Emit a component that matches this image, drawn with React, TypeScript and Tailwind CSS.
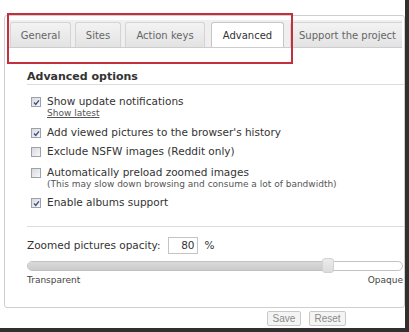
import React from 'react';

const Box: React.FC<{ checked?: boolean }> = ({ checked }) => (
  <span className="mt-[2px] flex h-[10px] w-[10px] shrink-0 items-center justify-center border border-[#9ca1aa] bg-gradient-to-br from-[#d8d9df] to-[#f7f7f9]">
    {checked && (
      <svg viewBox="0 0 8 8" className="h-[7px] w-[7px]">
        <path d="M1.2 4 L3.2 6.2 L6.8 1.6" fill="none" stroke="#3d4c7c" strokeWidth="1.5" />
      </svg>
    )}
  </span>
);

const Tab: React.FC<{ label: string; className?: string; active?: boolean }> = ({ label, className = '', active }) => (
  <div
    className={
      active
        ? `relative -mb-px flex h-[26px] items-center justify-center rounded-t-[3px] border border-b-0 border-[#c6c6c6] bg-white text-[#333] ${className}`
        : `flex h-[25px] items-center justify-center rounded-t-[3px] border border-b-0 border-[#d4d4d4] bg-gradient-to-b from-[#f3f3f3] to-[#e3e3e3] text-[#666] ${className}`
    }
  >
    {label}
  </div>
);

export default function App() {
  return (
    <div className="relative h-[332px] w-[409px] overflow-hidden bg-white font-['DejaVu_Sans',sans-serif] text-[#333]">
      <div className="h-[332px] w-[409px] border-b-4 border-r-4 border-[#303030] pl-[4px] pt-[15px]">
        <div className="h-[293px] w-[401px] overflow-hidden rounded-[3px] border border-[#cfcfcf]">
          {/* tabs */}
          <div className="mx-[2px] mt-[4px] flex h-[28px] items-end overflow-hidden border-b border-[#cdcdcd] bg-[#efefef] px-[3px] text-[10px] whitespace-nowrap">
            <Tab label="General" className="w-[61px] shrink-0" />
            <Tab label="Sites" className="ml-[4px] w-[46px] shrink-0" />
            <Tab label="Action keys" className="ml-[4px] w-[80px] shrink-0" />
            <Tab label="Advanced" active className="ml-[6px] w-[73px] shrink-0" />
            <Tab label="Support the project" className="ml-[6px] shrink-0 px-[8px]" />
          </div>

          <div className="pl-[22px]">
            <div className="mt-[22px] border-b border-[#dcdcdc] text-[11px] leading-[14px] font-bold">Advanced options</div>

            <div className="text-[10.5px] leading-[13px]">
              <div className="mt-[10px] flex pl-[4px]">
                <Box checked />
                <div className="ml-[6px]">
                  <div>Show update notifications</div>
                  <div className="text-[9px] leading-[11px] text-[#555] underline">Show latest</div>
                </div>
              </div>
              <div className="mt-[7px] flex pl-[4px]">
                <Box checked />
                <div className="ml-[6px]">Add viewed pictures to the browser's history</div>
              </div>
              <div className="mt-[6px] flex pl-[4px]">
                <Box />
                <div className="ml-[6px]">Exclude NSFW images (Reddit only)</div>
              </div>
              <div className="mt-[8px] flex pl-[4px]">
                <Box />
                <div className="ml-[6px]">
                  <div>Automatically preload zoomed images</div>
                  <div className="text-[9px] leading-[11px] text-[#555]">
                    (This may slow down browsing and consume a lot of bandwidth)
                  </div>
                </div>
              </div>
              <div className="mt-[6px] flex pl-[4px]">
                <Box checked />
                <div className="ml-[6px]">Enable albums support</div>
              </div>
            </div>

            <div className="mt-[17px] h-px bg-[#dcdcdc]" />

            <div className="mt-[10px] flex h-[17px] items-center text-[10.5px]">
              <span>Zoomed pictures opacity:</span>
              <span className="ml-[7px] flex h-[17px] w-[30px] items-center justify-end border border-[#c4c4c4] pr-[2px]">80</span>
              <span className="ml-[7px]">%</span>
            </div>

            <div className="relative mt-[7px] mr-[1px] flex h-[10px] rounded-full border border-[#c2c2c2] bg-white">
              <div className="h-full w-[296px] rounded-l-full bg-gradient-to-b from-[#dadada] to-[#cbcbcb]" />
              <div className="absolute left-[294px] top-[-4px] h-[15px] w-[12px] rounded-[3px] border border-[#d2d2d2] bg-gradient-to-b from-[#ececec] to-[#dcdcdc]" />
            </div>

            <div className="mt-[3px] flex justify-between pr-[1px] text-[9px] leading-[13px] text-[#444]">
              <span>Transparent</span>
              <span>Opaque</span>
            </div>
          </div>
        </div>

        <div className="mt-[3px] flex pl-[263px] font-['Liberation_Sans',sans-serif] text-[10px] text-[#8a8a8a]">
          <div className="flex h-[15px] w-[34px] items-center justify-center rounded-[2px] border border-[#c8c8c8] bg-[#f4f4f4]">Save</div>
          <div className="ml-[8px] flex h-[15px] w-[37px] items-center justify-center rounded-[2px] border border-[#c8c8c8] bg-[#f4f4f4]">Reset</div>
        </div>
      </div>

      {/* annotation */}
      <div className="absolute left-[7px] top-[13px] h-[51px] w-[286px] border-2 border-[#c42f3d]" />
    </div>
  );
}
